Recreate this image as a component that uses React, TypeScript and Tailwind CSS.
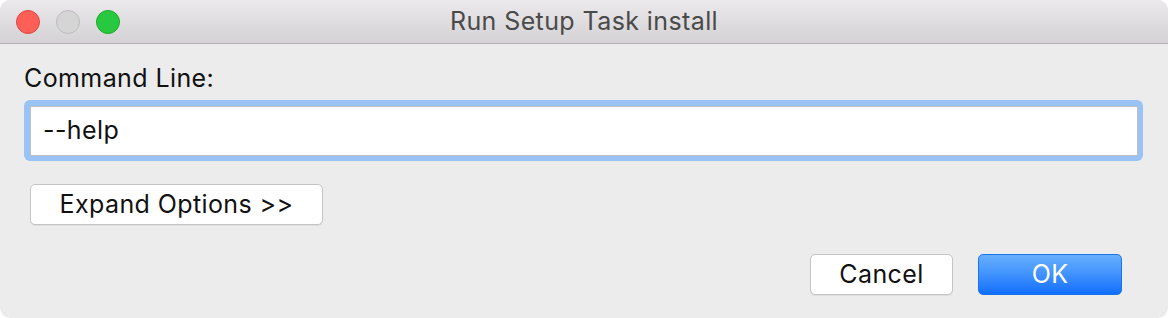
import React from "react";

const font = { fontFamily: '"Inter", "Liberation Sans", sans-serif' };

export default function App() {
  return (
    <div className="w-[1168px] h-[318px] bg-white tracking-[0.4px]" style={font}>
      <div className="w-full h-full rounded-[10px] overflow-hidden bg-[#ececec] flex flex-col">
        <div className="relative h-[44px] shrink-0 bg-gradient-to-b from-[#ebe9eb] to-[#d4d2d4] border-b border-[#b4b4b4] flex items-center">
          <div className="flex items-center gap-[16px] pl-[16px]">
            <div className="w-[24px] h-[24px] rounded-full bg-[#fe5f57] border border-[#e2463f]" />
            <div className="w-[24px] h-[24px] rounded-full bg-[#d6d5d6] border border-[#bdbcbd]" />
            <div className="w-[24px] h-[24px] rounded-full bg-[#28c840] border border-[#1aab29]" />
          </div>
          <div className="absolute inset-0 flex items-center justify-center text-[25px] text-[#4a4a4a] pointer-events-none">
            Run Setup Task install
          </div>
        </div>
        <div className="flex flex-col px-[24px] pt-[20px]">
          <div className="text-[25px] leading-[28px] text-[#111]">Command Line:</div>
          <div className="mt-[8px] w-[1119px] rounded-[6px] bg-[#99c2f5] p-[6px] pr-[5px] pb-[5px]">
            <div className="h-[50px] bg-white border border-[#bfbfbf] flex items-center pl-[12px] text-[25px] text-[#111]">
              --help
            </div>
          </div>
          <div className="mt-[23px] pl-[6px]">
            <button className="w-[293px] h-[41px] bg-white border border-[#c4c4c4] rounded-[5px] shadow-[0_1px_0_rgba(0,0,0,0.06)] text-[25px] text-[#111] flex items-center justify-center">
              Expand Options &gt;&gt;
            </button>
          </div>
          <div className="mt-[29px] flex justify-end gap-[25px] pr-[22px]">
            <button className="w-[143px] h-[41px] bg-white border border-[#c4c4c4] rounded-[5px] shadow-[0_1px_0_rgba(0,0,0,0.06)] text-[25px] text-[#111] flex items-center justify-center">
              Cancel
            </button>
            <button className="w-[144px] h-[41px] bg-gradient-to-b from-[#68b0fd] to-[#0d6ffd] border border-[#1a74f0] rounded-[5px] text-[25px] text-white flex items-center justify-center">
              OK
            </button>
          </div>
        </div>
      </div>
    </div>
  );
}
